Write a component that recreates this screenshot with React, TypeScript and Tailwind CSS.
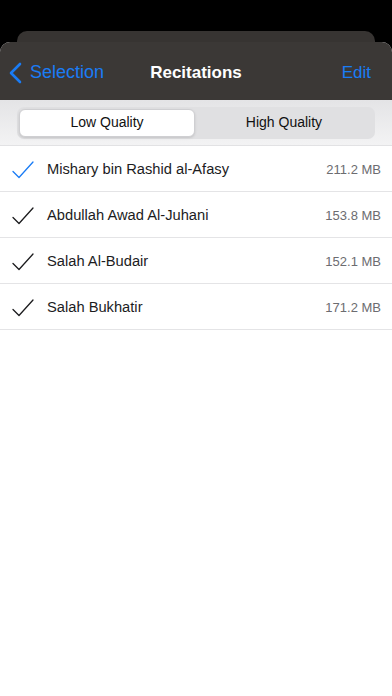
const ITEMS = [
  { name: 'Mishary bin Rashid al-Afasy', size: '211.2 MB', active: true },
  { name: 'Abdullah Awad Al-Juhani', size: '153.8 MB', active: false },
  { name: 'Salah Al-Budair', size: '152.1 MB', active: false },
  { name: 'Salah Bukhatir', size: '171.2 MB', active: false },
];

function Check({ active }: { active: boolean }) {
  return (
    <svg width="24" height="20" viewBox="0 0 24 20" fill="none">
      <path
        d="M2 11.5 L8 17.5 L22 2"
        stroke={active ? '#1a7cf5' : '#1c1c1e'}
        strokeWidth="1.3"
        strokeLinecap="round"
        strokeLinejoin="round"
      />
    </svg>
  );
}

export default function App() {
  return (
    <div className="w-[392px] h-[696px] bg-black flex flex-col overflow-hidden font-['Liberation_Sans',Arial,sans-serif]">
      {/* stacked card behind */}
      <div className="h-[31px] shrink-0" />
      <div className="mx-[17px] h-[11px] shrink-0 rounded-t-[10px] bg-[#373432]" />

      {/* sheet */}
      <div className="flex-1 flex flex-col rounded-t-[10px] bg-white overflow-hidden">
        {/* nav bar */}
        <div className="h-[58px] shrink-0 bg-[#3b3836] flex items-center pt-[3px] px-[9px] relative">
          <div className="flex items-center gap-[8px] text-[#1a7cf5]">
            <svg width="13" height="22" viewBox="0 0 13 22" fill="none">
              <path d="M11 2 L2 11 L11 20" stroke="#1a7cf5" strokeWidth="2.6" strokeLinecap="round" strokeLinejoin="round" />
            </svg>
            <span className="text-[18px]">Selection</span>
          </div>
          <span className="absolute left-0 right-0 text-center text-white text-[17px] font-bold pointer-events-none">
            Recitations
          </span>
          <span className="ml-auto mr-[12px] text-[17px] text-[#1a7cf5]">Edit</span>
        </div>

        {/* segmented control bar */}
        <div className="h-[46px] shrink-0 bg-gradient-to-b from-[#e4e4e6] to-[#f3f3f4] px-[17px] flex items-center border-b border-[#e2e2e4]">
          <div className="flex-1 h-[32px] rounded-[7px] bg-[#e0e0e2] p-[2px] flex text-[14px] text-[#111]">
            <div className="w-[176px] rounded-[6px] bg-white border border-[#cfcfd2] shadow-sm flex items-center justify-center">
              Low Quality
            </div>
            <div className="flex-1 flex items-center justify-center">High Quality</div>
          </div>
        </div>

        {/* list */}
        <div className="flex flex-col">
          {ITEMS.map((item) => (
            <div key={item.name} className="h-[46px] flex items-center border-b border-[#e4e4e6] pt-[2px] px-[11px]">
              <Check active={item.active} />
              <span className="ml-[12px] text-[14.7px] text-[#1c1c1e]">{item.name}</span>
              <span className="ml-auto text-[13px] text-[#6c6c70]">{item.size}</span>
            </div>
          ))}
        </div>
      </div>
    </div>
  );
}
